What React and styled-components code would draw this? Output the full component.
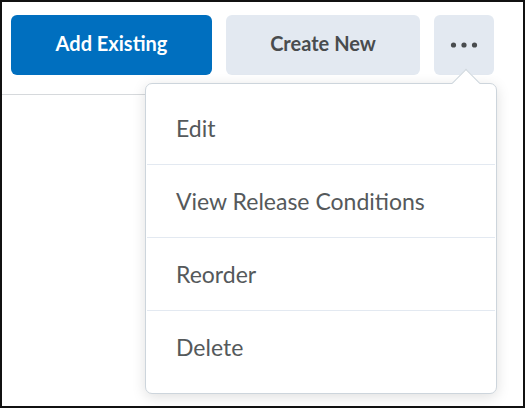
import React from "react";
import styled, { createGlobalStyle } from "styled-components";

const Global = createGlobalStyle`
  html, body { margin: 0; padding: 0; background: #ffffff; }
  body { font-family: Lato, "Open Sans", sans-serif; }
`;

const Frame = styled.div`
  position: relative;
  box-sizing: border-box;
  width: 525px;
  height: 408px;
  border: 2px solid #111;
  background: #fff;
  overflow: hidden;
`;

const Toolbar = styled.div`
  display: flex;
  gap: 14px;
  padding: 13px 0 0 9px;
`;

const Button = styled.button`
  box-sizing: border-box;
  height: 60px;
  width: ${(p) => p.$w}px;
  border: none;
  border-radius: 6px;
  font-family: Lato, sans-serif;
  font-weight: 700;
  font-size: 20px;
  background: ${(p) => (p.$primary ? "#006fbf" : "#e3e9f1")};
  color: ${(p) => (p.$primary ? "#ffffff" : "#494c4e")};
  display: flex;
  align-items: center;
  justify-content: center;
  padding: 0 0 ${(p) => (p.$icon ? 0 : 4)}px 0;
  cursor: pointer;
`;

const Divider = styled.div`
  margin-top: 19px;
  margin-right: 40px;
  height: 1px;
  background: #d6d9dc;
`;

const Menu = styled.div`
  position: absolute;
  left: 143px;
  top: 81px;
  box-sizing: border-box;
  width: 352px;
  height: 311px;
  border: 1px solid #cdd5dc;
  border-radius: 7px;
  background: #fff;
  box-shadow: 0 3px 14px rgba(0, 0, 0, 0.13);
  padding: 8px 1px;
  display: flex;
  flex-direction: column;
`;

const Caret = styled.div`
  position: absolute;
  left: 310px;
  top: -11px;
  width: 20px;
  height: 20px;
  background: #fff;
  border-top: 1px solid #cdd5dc;
  border-left: 1px solid #cdd5dc;
  box-sizing: border-box;
  transform: rotate(45deg);
`;

const Item = styled.div`
  height: 72px;
  display: flex;
  align-items: center;
  padding-left: 29px;
  font-size: 23px;
  color: #55595b;
  border-top: ${(p) => (p.$first ? "none" : "1px solid #e3e9f1")};
`;

const Dots = () => (
  <svg width="28" height="8" viewBox="0 0 28 8">
    <circle cx="3.5" cy="4" r="2.6" fill="#494c4e" />
    <circle cx="14" cy="4" r="2.6" fill="#494c4e" />
    <circle cx="24.5" cy="4" r="2.6" fill="#494c4e" />
  </svg>
);

export default function App() {
  const items = ["Edit", "View Release Conditions", "Reorder", "Delete"];
  return (
    <>
      <Global />
      <Frame>
        <Toolbar>
          <Button $primary $w={201}>Add Existing</Button>
          <Button $w={194}>Create New</Button>
          <Button $icon $w={60} aria-label="More actions"><Dots /></Button>
        </Toolbar>
        <Divider />
        <Menu>
          <Caret />
          {items.map((t, i) => (
            <Item key={t} $first={i === 0}>{t}</Item>
          ))}
        </Menu>
      </Frame>
    </>
  );
}
